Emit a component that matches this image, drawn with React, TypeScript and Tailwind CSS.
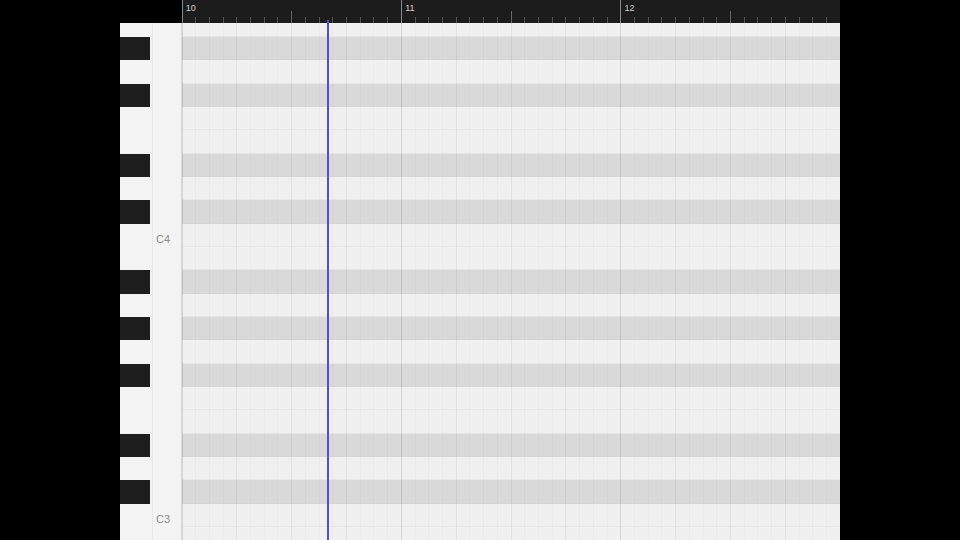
import React from "react";

type Row = { black: boolean; label?: string; h?: number };

const ROWS: Row[] = [
  { black: false, h: 14 },
  { black: true },
  { black: false },
  { black: true },
  { black: false },
  { black: false },
  { black: true },
  { black: false },
  { black: true },
  { black: false, label: "C4" },
  { black: false },
  { black: true },
  { black: false },
  { black: true },
  { black: false },
  { black: true },
  { black: false },
  { black: false },
  { black: true },
  { black: false },
  { black: true },
  { black: false, label: "C3" },
  { black: false },
];

const GRID_W = 658;
const STEP = 219.4 / 16;

function GridLines() {
  const lines = [];
  for (let i = 0; i <= 48; i++) {
    const x = Math.floor(i * STEP) + 0.5;
    let c = "rgba(0,0,0,0.022)";
    if (i % 16 === 0) c = "rgba(0,0,0,0.11)";
    else if (i % 4 === 0) c = "rgba(0,0,0,0.06)";
    lines.push(<line key={i} x1={x} x2={x} y1={0} y2={600} stroke={c} strokeWidth={1} />);
  }
  return (
    <svg className="absolute inset-0 pointer-events-none" width={GRID_W} height={600} shapeRendering="crispEdges">
      {lines}
    </svg>
  );
}

function RulerTicks() {
  const ticks = [];
  for (let i = 0; i <= 48; i++) {
    const x = Math.floor(i * STEP) + 0.5;
    if (i % 16 === 0) {
      ticks.push(<line key={i} x1={x} x2={x} y1={0} y2={23} stroke="#8a8a8a" strokeWidth={1} />);
    } else if (i % 8 === 0) {
      ticks.push(<line key={i} x1={x} x2={x} y1={11} y2={23} stroke="#666666" strokeWidth={1} />);
    } else {
      ticks.push(<line key={i} x1={x} x2={x} y1={17} y2={23} stroke="#555555" strokeWidth={1} />);
    }
  }
  return (
    <svg className="absolute inset-0 pointer-events-none" width={GRID_W} height={23} shapeRendering="crispEdges">
      {ticks}
    </svg>
  );
}

export default function App() {
  return (
    <div
      className="w-[960px] h-[540px] bg-black flex justify-center overflow-hidden"
      style={{ fontFamily: '"Liberation Sans", Arial, sans-serif' }}
    >
      <div className="w-[720px] h-[540px] flex flex-col relative">
        {/* Ruler */}
        <div className="h-[23px] flex shrink-0">
          <div className="w-[62px] bg-black" />
          <div className="flex-1 bg-[#1c1c1c] relative flex">
            <RulerTicks />
            {["10", "11", "12"].map((n) => (
              <div key={n} className="w-[219.4px] shrink-0 pl-[4px] pt-[4px] text-[9px] leading-none text-[#d0d0d0] relative">
                {n}
              </div>
            ))}
          </div>
        </div>
        {/* Body */}
        <div className="flex-1 flex overflow-hidden">
          {/* Keys */}
          <div className="w-[62px] shrink-0 bg-[#f3f3f3] flex flex-col border-r border-[#d8d8d8] relative">
            <div className="absolute top-0 bottom-0 left-[32px] w-px bg-[#e8e8e8]" />
            {ROWS.map((r, i) => (
              <div
                key={i}
                className={`shrink-0 relative flex items-end justify-end ${r.h ? "h-[14px]" : "h-[23.333px]"}`}
              >
                {r.black && <div className="absolute left-0 top-0 w-[30px] h-full bg-[#1e1e1e]" />}
                {r.label && (
                  <span className="text-[11px] leading-none text-[#8e8e8e] pr-[11px] pb-[2px]">{r.label}</span>
                )}
              </div>
            ))}
          </div>
          {/* Grid */}
          <div className="flex-1 relative flex flex-col overflow-hidden">
            {ROWS.map((r, i) => (
              <div
                key={i}
                className={`shrink-0 border-b ${r.h ? "h-[14px]" : "h-[23.333px]"} ${
                  r.black ? "bg-[#d9d9d9] border-[#d6d6d6]" : "bg-[#f0f0f0] border-[#e6e6e6]"
                }`}
              />
            ))}
            <GridLines />
          </div>
        </div>
        {/* Playhead */}
        <div className="absolute left-[207px] top-[20px] bottom-0 w-[2px] bg-[#5050d0]" />
      </div>
    </div>
  );
}
